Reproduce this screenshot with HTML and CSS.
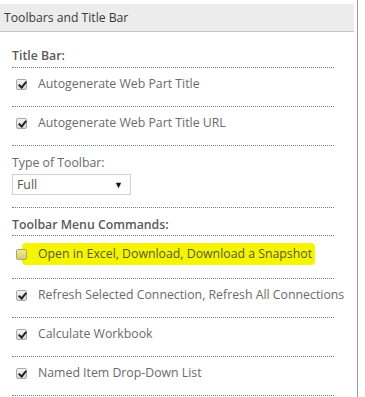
FILE: index.html
```html
<!DOCTYPE html>
<html lang="en">
<head>
  <meta charset="UTF-8">
  <title>Toolbars and Title Bar</title>
  <link rel="stylesheet" href="styles.css">
</head>
<body>
  <div class="panel">
    <div class="header">Toolbars and Title Bar</div>
    <div class="body">
      <div class="group-title">Title Bar:</div>
      <div class="row"><span class="box checked"></span><span class="label">Autogenerate Web Part Title</span></div>
      <div class="row"><span class="box checked"></span><span class="label">Autogenerate Web Part Title URL</span></div>

      <div class="field">
        <div class="field-label">Type of Toolbar:</div>
        <div class="select"><span>Full</span><span class="arrow">&#9660;</span></div>
      </div>

      <div class="group-title menu">Toolbar Menu Commands:</div>
      <div class="row"><span class="box"></span><span class="label mark">Open in Excel, Download, Download a Snapshot</span></div>
      <div class="row"><span class="box checked"></span><span class="label">Refresh Selected Connection, Refresh All Connections</span></div>
      <div class="row"><span class="box checked"></span><span class="label">Calculate Workbook</span></div>
      <div class="row"><span class="box checked"></span><span class="label">Named Item Drop-Down List</span></div>
    </div>
  </div>
</body>
</html>
```

FILE: styles.css
```css
* {
  margin: 0;
  padding: 0;
  box-sizing: border-box;
}
html, body {
  height: 100%;
  background: #fff;
  font-family: "Open Sans", "Noto Sans", sans-serif;
  font-size: 12.3px;
  color: #6a6a6a;
  overflow: hidden;
}
/* Tool pane column, grey rule on the right */
.panel {
  width: 358px;
  height: 100%;
  border-right: 1px solid #9a9a9a;
  padding-top: 4px;
}
.header {
  width: 354px;
  height: 28px;
  line-height: 27px;
  padding-left: 4px;
  background: #ececec;
  border-bottom: 1px solid #c6c6c6;
  font-size: 12.2px;
  color: #3a3a3a;
}
.body {
  padding: 0 12px 0 12px;
  width: 346px;
}
.group-title {
  padding-top: 14px;
  padding-bottom: 1px;
  line-height: 20px;
  font-weight: 600;
  color: #5a5a5a;
  border-bottom: 1px dotted #6f7f93;
}
.group-title.menu {
  padding-top: 7px;
  padding-bottom: 0;
}
.row {
  display: flex;
  align-items: center;
  padding: 7px 0 13px 4px;
  line-height: 18px;
  border-bottom: 1px dotted #6f7f93;
}
.box {
  position: relative;
  z-index: 1;
  flex-shrink: 0;
  width: 11px;
  height: 11px;
  margin-right: 11px;
  border: 1px solid #a9a9a9;
  border-radius: 2px;
  background: linear-gradient(#f4f4f4, #d8d8d8);
}
.box.checked::after {
  content: "";
  position: absolute;
  left: 3px;
  top: 0px;
  width: 3px;
  height: 6px;
  border: solid #222;
  border-width: 0 2px 2px 0;
  transform: rotate(40deg);
}
.label {
  white-space: nowrap;
}
/* Yellow marker over the first command */
.mark {
  position: relative;
  background: #f5f500;
  margin-left: -16px;
  padding: 2px 3px 2px 16px;
  border-radius: 4px;
  color: #5a5a40;
}
.row:has(.mark) .box {
  background: linear-gradient(#eeee90, #cfcf70);
  border-color: #a8a870;
  z-index: 1;
}
.field {
  padding-top: 8px;
  padding-bottom: 12px;
  border-bottom: 1px dotted #6f7f93;
}
.field-label {
  line-height: 18px;
}
.select {
  display: flex;
  justify-content: space-between;
  align-items: center;
  width: 119px;
  height: 21px;
  margin-top: 2px;
  padding: 0 7px 0 4px;
  border: 1px solid #d2d2d2;
  color: #555;
}
.arrow {
  font-size: 9px;
  color: #111;
}
```
